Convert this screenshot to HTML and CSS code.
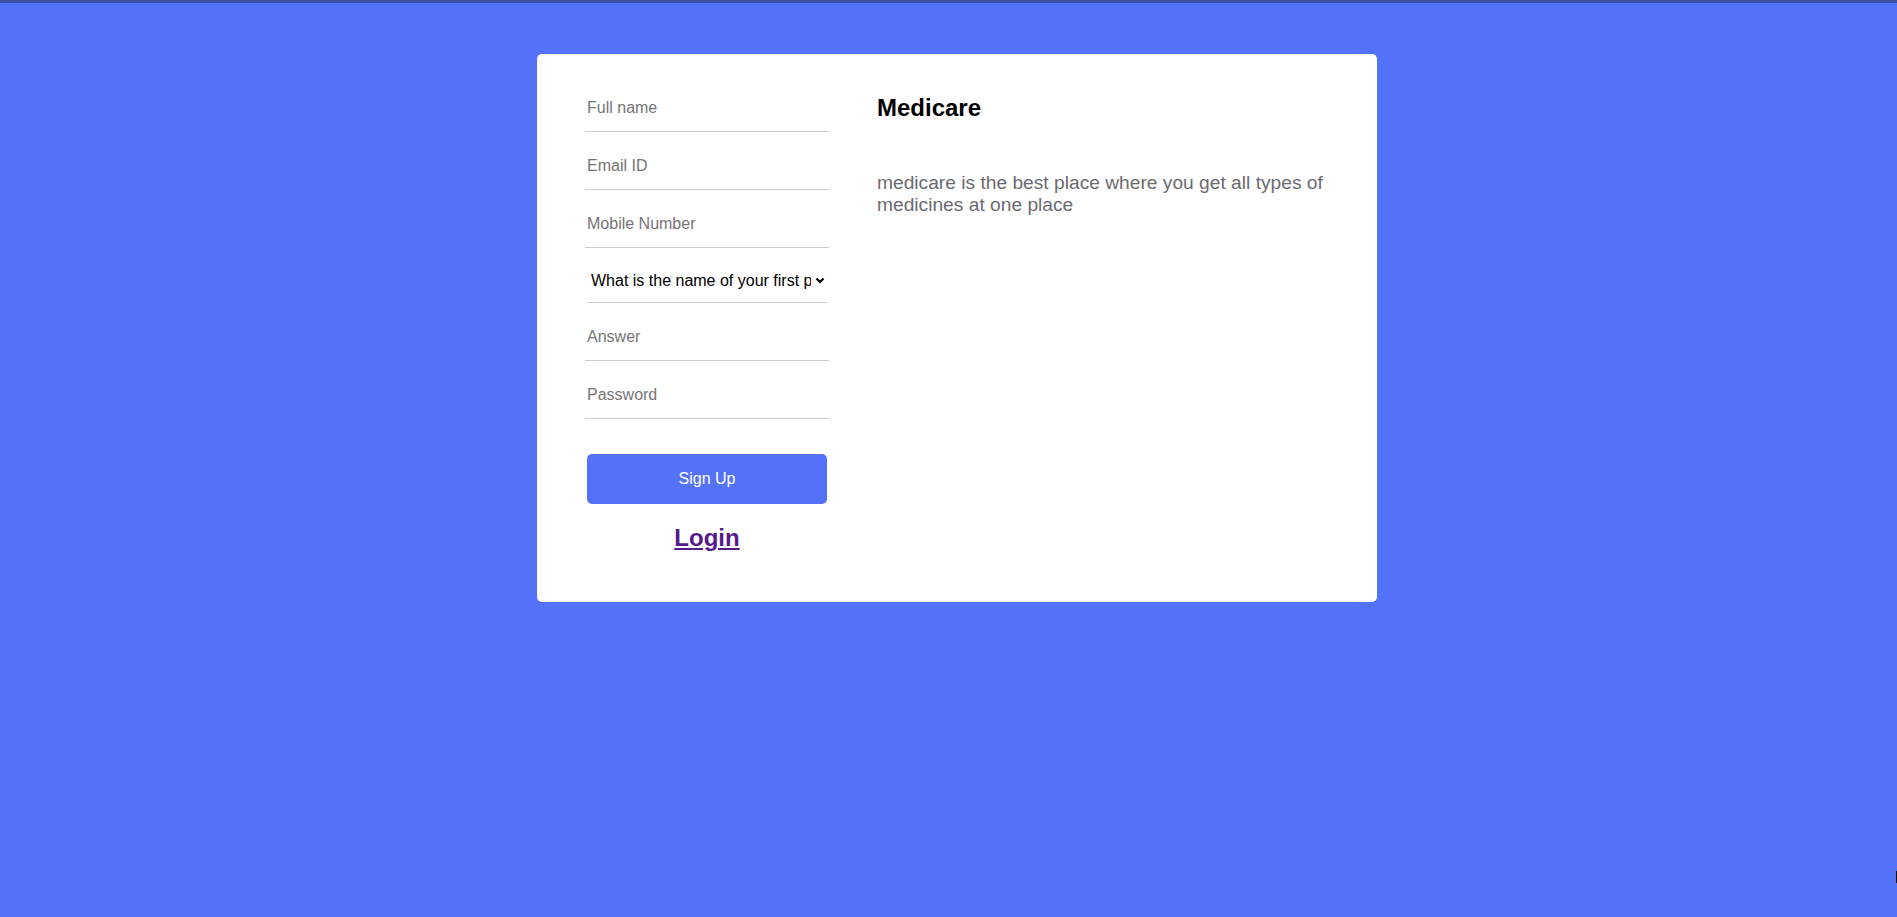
FILE: index.html
```html
<!DOCTYPE html>
<html lang="en">
<head>
<meta charset="utf-8">
<title>Medicare - Sign Up</title>
<link rel="stylesheet" href="styles.css">
</head>
<body>
<div class="topbar"></div>
<main class="page">
  <div class="card">
    <form class="form">
      <input class="field" type="text" placeholder="Full name">
      <input class="field" type="text" placeholder="Email ID">
      <input class="field" type="text" placeholder="Mobile Number">
      <div class="select-wrap">
        <select class="select">
          <option>What is the name of your first pet?</option>
          <option>What city were you born in?</option>
        </select>
        <svg class="chevron" width="10" height="7" viewBox="0 0 10 7"><path d="M1.5 1.5 L5 5 L8.5 1.5" fill="none" stroke="#000" stroke-width="2.2"/></svg>
      </div>
      <input class="field" type="text" placeholder="Answer">
      <input class="field" type="password" placeholder="Password">
      <button class="btn" type="button">Sign Up</button>
      <div class="login-row"><a class="login" href="#">Login</a></div>
    </form>
    <section class="info">
      <h2 class="title">Medicare</h2>
      <p class="desc">medicare is the best place where you get all types of medicines at one place</p>
    </section>
  </div>
</main>
<span class="edge-mark"></span>
</body>
</html>
```

FILE: styles.css
```css
html, body {
  margin: 0;
  padding: 0;
}
body {
  background: #5472f9;
  font-family: "Liberation Sans", Arial, sans-serif;
  min-height: 917px;
  overflow: hidden;
}
.topbar {
  height: 3px;
  background: #3e50a2;
}
.page {
  display: flex;
  justify-content: center;
  padding: 51px 0 0 17px;
}
.card {
  display: flex;
  box-sizing: border-box;
  width: 840px;
  height: 548px;
  background: #fff;
  border-radius: 5px;
  padding: 30px 24px 0 48px;
}
.form {
  width: 244px;
  display: flex;
  flex-direction: column;
}
.field {
  display: block;
  box-sizing: border-box;
  width: 244px;
  height: 48px;
  margin: 0 0 10px 0;
  padding: 0 2px;
  border: 0;
  border-bottom: 1px solid #cccccc;
  outline: none;
  font-family: "Liberation Sans", Arial, sans-serif;
  font-size: 16px;
  color: #222;
  background: #fff;
}
.field::placeholder {
  color: #757575;
}
.select-wrap {
  position: relative;
  box-sizing: border-box;
  width: 240px;
  height: 45px;
  margin: 0 0 10px 2px;
  border-bottom: 1px solid #cccccc;
}
.select {
  -webkit-appearance: none;
  appearance: none;
  display: block;
  width: 100%;
  height: 44px;
  border: 0;
  outline: none;
  background: #fff;
  padding: 0 16px 0 4px;
  font-family: "Liberation Sans", Arial, sans-serif;
  font-size: 16px;
  color: #000;
  white-space: nowrap;
  overflow: hidden;
}
.chevron {
  position: absolute;
  right: 2px;
  top: 19px;
  pointer-events: none;
}
.btn {
  margin: 25px 0 0 2px;
  width: 240px;
  height: 50px;
  border: 0;
  border-radius: 5px;
  background: #5472f9;
  color: #fff;
  font-family: "Liberation Sans", Arial, sans-serif;
  font-size: 16px;
  cursor: pointer;
}
.login-row {
  margin-top: 20px;
  text-align: center;
}
.login {
  font-size: 24px;
  font-weight: bold;
  color: #551a8b;
  text-decoration: underline;
}
.info {
  flex: 1;
  margin-left: 48px;
}
.title {
  margin: 10px 0 0 0;
  font-size: 24px;
  line-height: 28px;
  font-weight: bold;
  color: #000;
}
.desc {
  margin: 50px 0 0 0;
  font-size: 19.2px;
  line-height: 22px;
  color: #6b6b6f;
}
.edge-mark {
  position: absolute;
  right: 0;
  top: 871px;
  width: 1px;
  height: 12px;
  background: #111;
}
```
